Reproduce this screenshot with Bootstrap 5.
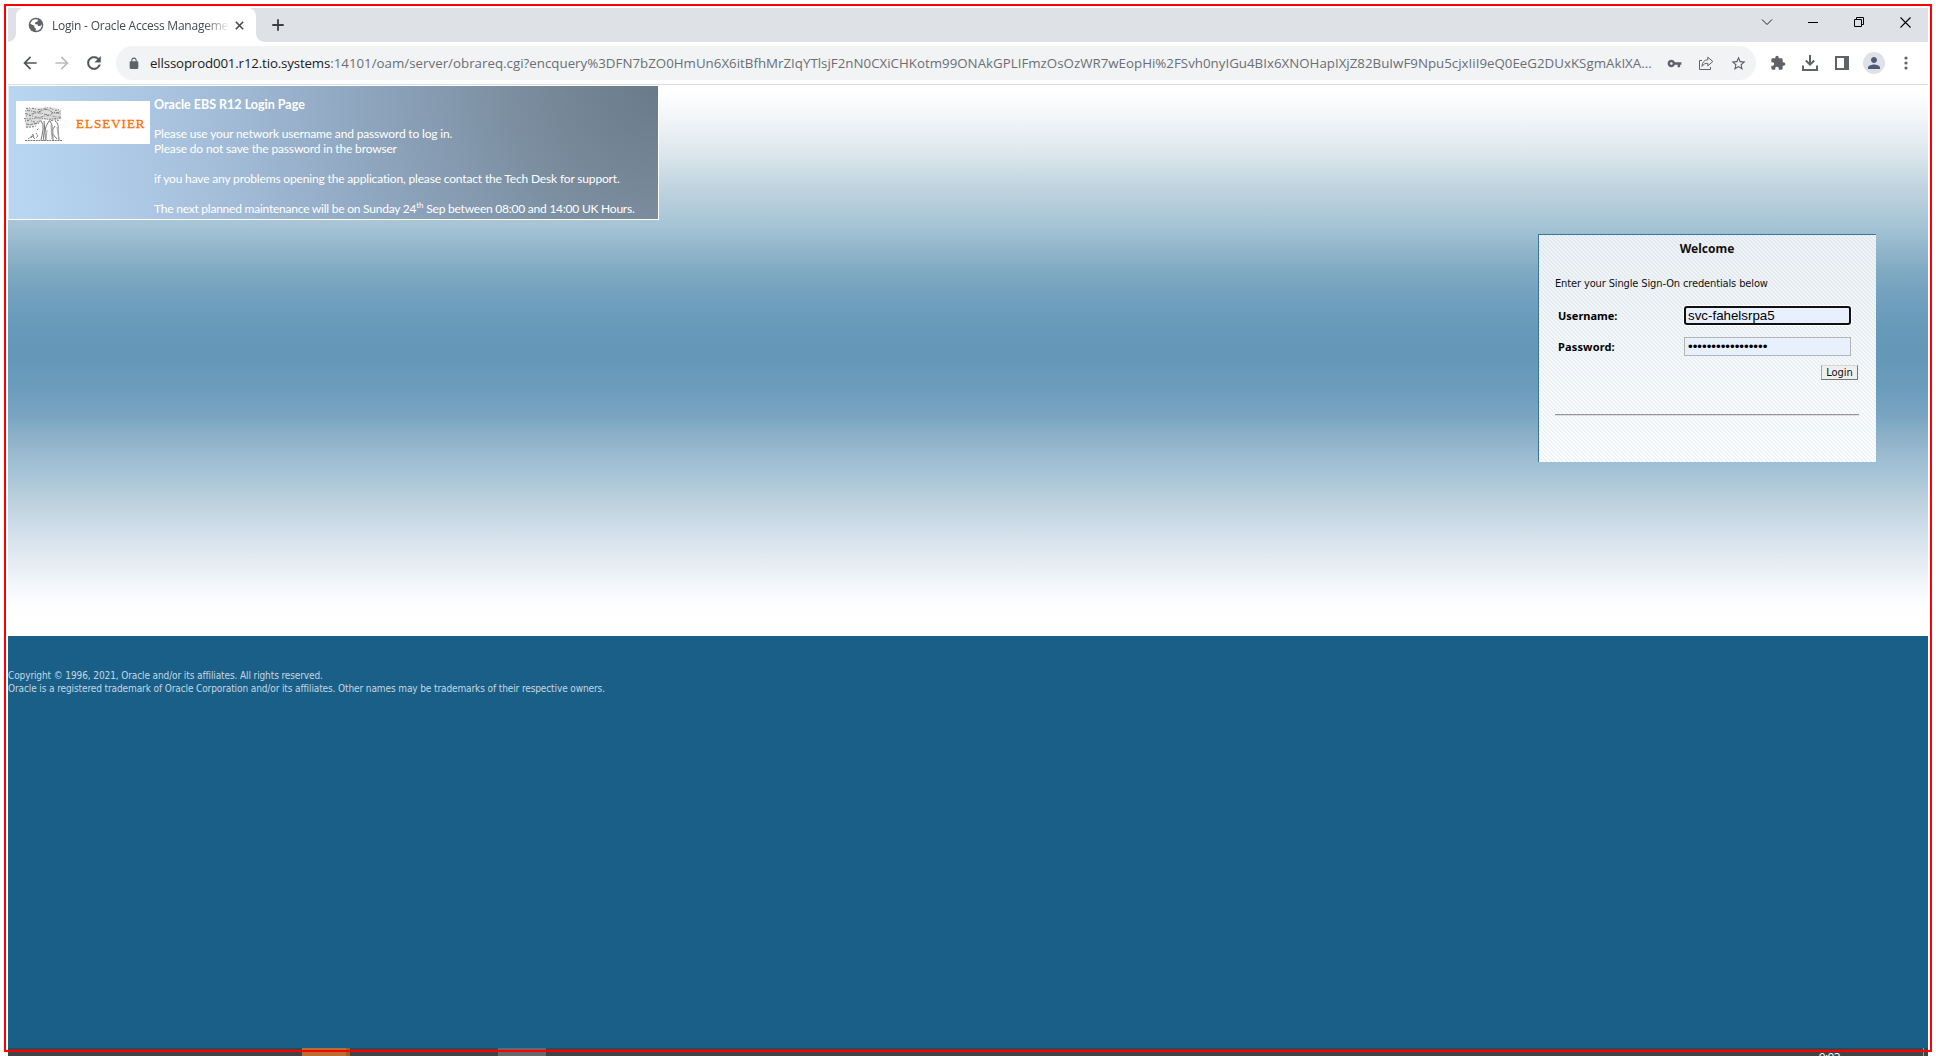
<!DOCTYPE html>
<html lang="en">
<head>
<meta charset="utf-8">
<title>Login - Oracle Access Management</title>
<link rel="stylesheet" href="https://cdn.jsdelivr.net/npm/bootstrap@5.3.0/dist/css/bootstrap.min.css">
<style>
  body { width: 1936px; height: 1056px; overflow: hidden; background: #fff; }
  .screen { width: 1936px; height: 1056px; padding: 8px 8px 0; }
  .outline-red { inset: 4px; border: 2px solid #f00; pointer-events: none; z-index: 5; }
  svg { display: block; flex: none; }

  .tabstrip { height: 34px; background: #dee1e6; padding-left: 8px; }
  .tab-active { width: 240px; height: 34px; background: #fff; border-radius: 8px 8px 0 0; padding-left: 12px; position: relative; }
  .tab-active::before, .tab-active::after { content: ""; position: absolute; bottom: 0; width: 8px; height: 8px; }
  .tab-active::before { left: -8px; background: radial-gradient(circle at 0 0, transparent 7.5px, #fff 8px); }
  .tab-active::after { right: -8px; background: radial-gradient(circle at 100% 0, transparent 7.5px, #fff 8px); }
  .tab-title { font: 12px "Open Sans", sans-serif; letter-spacing: -.23px; color: #45494d; width: 180px; margin-left: 8px; white-space: nowrap;
    -webkit-mask-image: linear-gradient(90deg, #000 152px, transparent 178px); mask-image: linear-gradient(90deg, #000 152px, transparent 178px); }
  .winbtn { width: 46px; height: 28px; }
  .toolbar-row { height: 42px; background: #fff; padding: 0 6px; gap: 6px; }
  .slot { width: 32px; height: 32px; display: flex; align-items: center; justify-content: center; color: #5f6368; }
  .omnibox { height: 34px; border-radius: 17px; background: #f1f3f4; padding: 0 2px 0 11px; }
  .url { font: 13.3px "Open Sans", sans-serif; color: #6b6f74; white-space: nowrap; margin-left: 9px; letter-spacing: .012px; }
  .url b { font-weight: 400; color: #202124; letter-spacing: -.16px; }
  .avatar { width: 22px; height: 22px; background: #dee1e6; color: #4f5b76; }

  .page-top { height: 552px; border-top: 1px solid #dadce0;
    background: linear-gradient(#fff 0, #fefefe 8px, #eff3f7 39px, #dce7ed 68px, #bfd3df 104px, #a6c4d5 140px, #7ea9c2 188px, #70a0be 215px, #6799b9 242px, #6598b8 272px, #6b9cbc 302px, #77a4c1 328px, #90b3ca 356px, #a6c4d7 388px, #b9cfdb 413px, #cedde8 442px, #e4ebf2 475px, #f5f8fb 504px, #fefefe 522px, #fff 551px); }
  .notice { width: 651px; height: 135px; border: 1px solid #fff; border-left-color: #e4eef8; padding: 7px 0 0 7px; gap: 4px; color: #fff;
    background: radial-gradient(circle at 100% 0, #6a7a89 0, #788a9b 120px, #8499ae 210px, #8fa6bf 300px, #a8c2de 480px, #b8d6f2 650px); }
  .brand-box { width: 134px; height: 43px; background: #fff; margin-top: 8px; padding: 0 0 0 8px; }
  .brand-name { font: 13px "Liberation Serif", serif; letter-spacing: 1.02px; color: #ff6c00; -webkit-text-stroke: .3px #ff6c00; margin-left: 14px; line-height: 46px; }
  .notice-text { font: 12px/15px Lato, sans-serif; letter-spacing: -.16px; white-space: nowrap; padding-top: 4px; font-variant-ligatures: none; }
  .notice-text h1 { font: bold 12.5px/15px Lato, sans-serif; margin: 0 0 14px; letter-spacing: 0; }
  .notice-text p { margin: 0 0 15px; }
  .notice-text p:last-child { letter-spacing: -.23px; }
  .notice-text sup { font-size: 8px; top: -5px; line-height: 0; vertical-align: baseline; letter-spacing: 0; }

  .login-box { width: 338px; height: 228px; margin: 14px 52px 0 auto; border: solid #3a7496; border-width: 1px 0 0 1px; padding: 0 17px 0 16px; color: #111;
    font-family: "DejaVu Sans Condensed", "DejaVu Sans", sans-serif; font-size: 11px;
    background: repeating-linear-gradient(45deg, rgba(140,175,190,.13) 0 .9px, rgba(255,255,255,.1) 1.4px 2.828px), linear-gradient(#edf1f5, #fdfeff); }
  .login-box h2 { font: bold 12px/15px "Noto Sans", sans-serif; margin: 6px 0 0; }
  .lead-in { margin: 20px 0 0; line-height: 16px; letter-spacing: -.13px; }
  .field-row { padding: 0 8px 0 3px; height: 19px; }
  .field-row label { font: bold 11px "Noto Sans", sans-serif; color: #000; margin-top: -1px; }
  .field-box { width: 167px; height: 19px; border: 1px solid #b5b5b5; border-radius: 0; background: #e8f0fe; padding: 0 0 0 3px; font: 13.33px "Liberation Sans", Arial, sans-serif; color: #000; outline: 0; }
  .field-focus { border: 2px solid #101010; border-radius: 3px; padding-left: 2px; box-shadow: 0 0 0 1px #fff; }
  .login-btn { width: 37px; height: 15px; border: 1px solid; border-color: #d5d5d5 #767676 #767676 #a5a5a5; background: #efefef; font-size: 11px; line-height: 12px; color: #111; padding: 0; border-radius: 0; margin-right: 1px; }
  .rule { border-top: 1px solid #999; border-bottom: 1px solid #ddd; height: 2px; margin-top: 34px; }

  .page-bottom { height: 412px; background: #1a5f88; padding-top: 33px; font: 10px/13px "DejaVu Sans Condensed", "DejaVu Sans", sans-serif; color: #c3d7e2; letter-spacing: -.11px; }
  .taskstrip { height: 8px; background: #414445; overflow: hidden; }
  .task-orange { width: 48px; background: #b96f31; margin-left: 294px; border-right: 4px solid #a35c22; }
  .task-gray { width: 48px; background: #666969; margin-left: 148px; }
  .clock { font: 12px/14px "Open Sans", sans-serif; color: #fff; margin-left: auto; padding-top: 3px; letter-spacing: -.6px; }
  .desk-edge { width: 1px; background: #999; margin: 0 4px 0 83px; }
</style>
<script src="https://cdn.jsdelivr.net/npm/bootstrap@5.3.0/dist/js/bootstrap.bundle.min.js"></script>
</head>
<body>
<div class="screen position-relative d-flex flex-column">
  <div class="outline-red position-absolute"></div>

  <div class="tabstrip d-flex">
    <div class="tab-active d-flex align-items-center">
      <svg width="16" height="16" viewBox="0 0 16 16"><circle cx="8" cy="8" r="7.3" fill="#5f6368"/><path d="M6.8 2.2 10 2.5 9.500 4.600 7.400 5.200 7 7 9.500 7.400 10.200 9 12.600 9 13.600 7.300 13.900 9 12.600 11.800 10 13.500 7.500 13.700 8 11.800 6.400 10.600 6.200 8.800 2.200 6.800 4 3.600Z" fill="#fff"/></svg>
      <div class="tab-title">Login - Oracle Access Manageme</div>
      <svg class="ms-auto" style="margin-right:12px" width="9" height="9" viewBox="0 0 9 9"><path d="M.8.8 8.2 8.2M8.2.8.8 8.2" stroke="#45494d" stroke-width="1.6"/></svg>
    </div>
    <svg class="align-self-center" style="margin-left:16px" width="12" height="12" viewBox="0 0 12 12"><path d="M6 .3v11.4M.3 6h11.4" stroke="#3c4043" stroke-width="1.8"/></svg>
    <div class="ms-auto d-flex">
      <div class="winbtn d-flex align-items-center justify-content-center"><svg width="12" height="12" viewBox="0 0 12 12"><path d="m1 3.500 5 5 5-5" fill="none" stroke="#222"/></svg></div>
      <div class="winbtn d-flex align-items-center justify-content-center"><svg width="10" height="10" viewBox="0 0 10 10"><path d="M0 5.500h10" stroke="#000"/></svg></div>
      <div class="winbtn d-flex align-items-center justify-content-center"><svg width="10" height="10" viewBox="0 0 10 10"><path d="M.5 2.500h7v7h-7zM2.500 2.500v-2h7v7h-2" fill="none" stroke="#000"/></svg></div>
      <div class="winbtn d-flex align-items-center justify-content-center"><svg width="11" height="11" viewBox="0 0 11 11"><path d="m.5.5 10 10M10.500.5l-10 10" stroke="#000" stroke-width="1.1"/></svg></div>
    </div>
  </div>

  <div class="toolbar-row d-flex align-items-center">
    <div class="d-flex">
      <div class="slot"><svg width="20" height="20" viewBox="0 0 24 24"><path fill="#50545a" d="M20 11H7.830l5.590-5.590L12 4l-8 8 8 8 1.410-1.410L7.830 13H20v-2z"/></svg></div>
      <div class="slot"><svg width="20" height="20" viewBox="0 0 24 24"><path fill="#babcbe" d="M4 11h12.170l-5.590-5.590L12 4l8 8-8 8-1.410-1.410L16.170 13H4z"/></svg></div>
      <div class="slot"><svg width="20" height="20" viewBox="0 0 24 24"><path fill="#50545a" stroke="#50545a" stroke-width=".4" d="M17.650 6.350C16.200 4.900 14.210 4 12 4c-4.420 0-7.990 3.580-7.990 8s3.570 8 7.990 8c3.730 0 6.840-2.550 7.730-6h-2.080c-.82 2.330-3.040 4-5.650 4-3.310 0-6-2.690-6-6s2.690-6 6-6c1.660 0 3.140.69 4.220 1.780L13 11h7V4l-2.350 2.350z"/></svg></div>
    </div>
    <div class="omnibox d-flex align-items-center flex-grow-1">
      <svg width="14" height="13" viewBox="0 0 24 24"><path fill="#5f6368" d="M18 8h-1V6c0-2.760-2.240-5-5-5S7 3.240 7 6v2H6c-1.100 0-2 .9-2 2v10c0 1.100.9 2 2 2h12c1.100 0 2-.9 2-2V10c0-1.100-.9-2-2-2zM9 6c0-1.660 1.340-3 3-3s3 1.340 3 3v2H9V6z"/></svg>
      <div class="url"><b>ellssoprod001.r12.tio.systems</b>:14101/oam/server/obrareq.cgi?encquery%3DFN7bZO0HmUn6X6itBfhMrZIqYTlsjF2nN0CXiCHKotm99ONAkGPLIFmzOsOzWR7wEopHi%2FSvh0nyIGu4BIx6XNOHapIXjZ82BuIwF9Npu5cjxIiI9eQ0EeG2DUxKSgmAkIXA...</div>
      <div class="d-flex ms-auto">
        <div class="slot"><svg width="15" height="15" viewBox="0 0 24 24"><path fill="#5f6368" d="M12.650 10C11.830 7.670 9.610 6 7 6c-3.310 0-6 2.690-6 6s2.690 6 6 6c2.610 0 4.830-1.670 5.650-4H17v4h4v-4h2v-4H12.650zM7 14c-1.100 0-2-.9-2-2s.9-2 2-2 2 .9 2 2-.9 2-2 2z"/></svg></div>
        <div class="slot"><svg width="16" height="16" viewBox="0 0 16 16" fill="none" stroke="#5f6368" stroke-linejoin="round"><path d="M4 5.500H1.500v9h11v-2.500"/><path d="M9.800 2.200v2.600C6.200 5 4.400 7.400 4 11.400c1.500-2.400 3.200-3.200 5.800-3.100v2.600l5-4.400z"/></svg></div>
        <div class="slot"><svg width="17" height="17" viewBox="0 0 24 24"><path fill="#5f6368" d="M22 9.240l-7.190-.62L12 2 9.190 8.630 2 9.240l5.460 4.730L5.820 21 12 17.270 18.180 21l-1.630-7.030L22 9.240zM12 15.400l-3.760 2.270 1-4.280-3.320-2.880 4.380-.38L12 6.100l1.710 4.040 4.380.38-3.320 2.880 1 4.280L12 15.400z"/></svg></div>
      </div>
    </div>
    <div class="d-flex">
      <div class="slot"><svg width="16" height="16" viewBox="0 0 24 24"><path fill="#5f6368" d="M20.500 11H19V7c0-1.100-.9-2-2-2h-4V3.500C13 2.120 11.880 1 10.500 1S8 2.120 8 3.500V5H4c-1.100 0-1.990.9-1.990 2v3.800H3.500c1.490 0 2.700 1.210 2.700 2.700s-1.210 2.700-2.700 2.700H2V20c0 1.100.9 2 2 2h3.800v-1.500c0-1.490 1.210-2.700 2.700-2.700 1.490 0 2.700 1.210 2.700 2.700V22H17c1.100 0 2-.9 2-2v-4h1.500c1.380 0 2.500-1.120 2.500-2.500S21.880 11 20.500 11z"/></svg></div>
      <div class="slot"><svg width="16" height="16" viewBox="0 0 16 16" fill="none" stroke="#5f6368" stroke-width="2"><path d="M8 0v9M3.800 5.500 8 9.600l4.200-4.100M1 10.500V15h14v-4.500"/></svg></div>
      <div class="slot"><svg width="14" height="14" viewBox="0 0 14 14"><path d="M0 0h14v14H0zM2 2v10h7V2z" fill="#5f6368" fill-rule="evenodd"/></svg></div>
      <div class="slot"><div class="avatar rounded-circle d-flex align-items-center justify-content-center"><svg width="18" height="18" viewBox="0 0 24 24"><path fill="currentColor" d="M12 12c2.210 0 4-1.790 4-4s-1.790-4-4-4-4 1.790-4 4 1.790 4 4 4zm0 2c-2.670 0-8 1.340-8 4v2h16v-2c0-2.660-5.330-4-8-4z"/></svg></div></div>
      <div class="slot"><svg width="4" height="14" viewBox="0 0 4 14" fill="#5f6368"><circle cx="2" cy="2" r="1.600"/><circle cx="2" cy="7" r="1.600"/><circle cx="2" cy="12" r="1.600"/></svg></div>
    </div>
  </div>

  <div class="page-top">
    <div class="notice d-flex align-items-start">
      <div class="brand-box d-flex">
        <svg style="margin-top:6px" width="38" height="35" viewBox="0 0 38 35" fill="none" stroke="#777">
          <path d="M2 1 30 .5 37 3 37 12 27 14 20 12 14 17 2 21 1 14Z" fill="#ddd" stroke="none"/>
          <g stroke-width="1">
            <path stroke-dasharray="2 1 1 2" d="M2 1.500q5-1 9 .5t9-.5 8 .5 8 0"/>
            <path stroke-dasharray="1 1 3 1" d="M1 4q4-1 8 .5t9-1 9 1 10-.5"/>
            <path stroke-dasharray="3 1 1 1.500" d="M1 6.500q5 1.500 9 0t10 .5 8-.5 9 .5"/>
            <path stroke-dasharray="1 2 2 1" d="M2 9q4-1 8 .5t9 0 9-.5 9 1"/>
            <path stroke-dasharray="2 1 1 1" d="M0 11.500q5 1 9 0t10 0 9 .5 9-1"/>
            <path stroke-dasharray="1 1 2 2" d="M1 14q4-1 8 .5t8-1M25 14l5-1 7 .5"/>
            <path stroke-dasharray="3 1" d="M2 17q4 1 7 0l6-1"/><path stroke-dasharray="2 1" d="M2 20q5 .5 10-1"/>
          </g>
          <path d="M17 14q3 3 2 9t-2 10M20 14q1 6 0 12t0 8M25 14q-4 5-4 11t1 8M26 14l2 4 0 5 1 10M31 14q4 2 3 9l1 10M31 19l-4 6 6 7" stroke-width="1"/>
          <path d="M27 18l1 14M33 20l2 13M23 23l-1 10M29 20v12" stroke="#aaa"/>
          <path d="M1 33.500h37M4 32l4-3 3 3M7 31l2-4 1 4M12 26l2 3-2 2M13 23l2-2" stroke-dasharray="2 .7"/>
        </svg>
        <div class="brand-name">ELSEVIER</div>
      </div>
      <div class="notice-text">
        <h1>Oracle EBS R12 Login Page</h1>
        <p>Please use your network username and password to log in.<br>Please do not save the password in the browser</p>
        <p>if you have any problems opening the application, please contact the Tech Desk for support.</p>
        <p>The next planned maintenance will be on Sunday 24<sup>th</sup> Sep between 08:00 and 14:00 UK Hours.</p>
      </div>
    </div>
    <form class="login-box">
      <h2 class="text-center">Welcome</h2>
      <p class="lead-in">Enter your Single Sign-On credentials below</p>
      <div class="field-row d-flex justify-content-between align-items-center" style="margin-top:14px">
        <label for="u">Username:</label>
        <input id="u" class="field-box field-focus" type="text" value="svc-fahelsrpa5">
      </div>
      <div class="field-row d-flex justify-content-between align-items-center" style="margin-top:12px">
        <label for="p" style="letter-spacing:.15px">Password:</label>
        <input id="p" class="field-box" type="password" value="12345678901234567">
      </div>
      <div class="d-flex justify-content-end" style="margin-top:9px"><button type="button" class="login-btn">Login</button></div>
      <div class="rule"></div>
    </form>
  </div>

  <div class="page-bottom">
    Copyright © 1996, 2021, Oracle and/or its affiliates. All rights reserved.<br>
    Oracle is a registered trademark of Oracle Corporation and/or its affiliates. Other names may be trademarks of their respective owners.
  </div>
  <div class="taskstrip d-flex">
    <div class="task-orange"></div>
    <div class="task-gray"></div>
    <div class="clock">9:03</div>
    <div class="desk-edge"></div>
  </div>
</div>
</body>
</html>
